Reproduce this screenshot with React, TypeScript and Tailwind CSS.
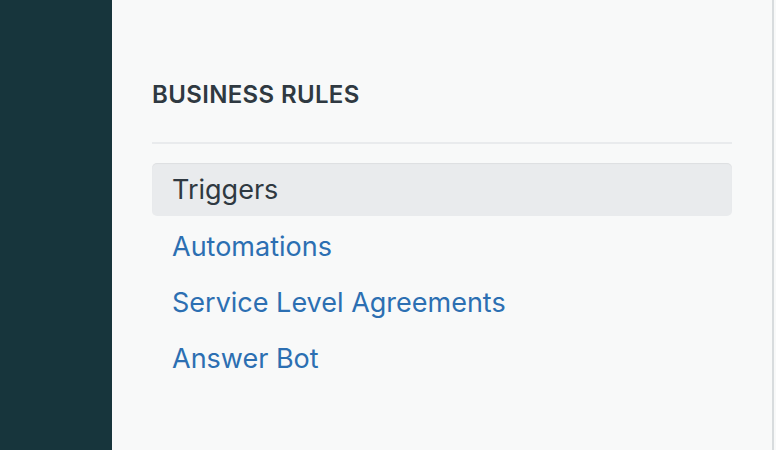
const items = ['Automations', 'Service Level Agreements', 'Answer Bot']

export default function App() {
  return (
    <div
      className="flex h-[450px] w-[776px] overflow-hidden bg-[#f8f9f9]"
      style={{ fontFamily: 'Inter, "Noto Sans", sans-serif' }}
    >
      <div className="w-[112px] shrink-0 bg-[#17353c]" />
      <div className="w-[660px] shrink-0 bg-[#f8f9f9] px-[40px] pt-[79px]">
        <h2 className="text-[24px] font-semibold leading-[32px] tracking-[0.35px] text-[#2f3941]">BUSINESS RULES</h2>
        <div className="mt-[31px] h-[2px] bg-[#e9ebed]" />
        <nav className="mt-[19px] flex flex-col">
          <div className="flex h-[53px] items-center rounded-[5px] bg-[#e9ebed] px-[20px] pt-[2px] text-[27px] text-[#2f3941] shadow-[inset_0_1px_1px_rgba(0,0,0,0.05)]">
            Triggers
          </div>
          {items.map((label) => (
            <a key={label} href="#" className="flex h-[56px] items-center px-[20px] pt-[6px] text-[27px] text-[#2c6fb2]">
              {label}
            </a>
          ))}
        </nav>
      </div>
      <div className="w-[2px] shrink-0 bg-[#d8dcde]" />
      <div className="flex-1 bg-[#f8f9f9]" />
    </div>
  )
}
